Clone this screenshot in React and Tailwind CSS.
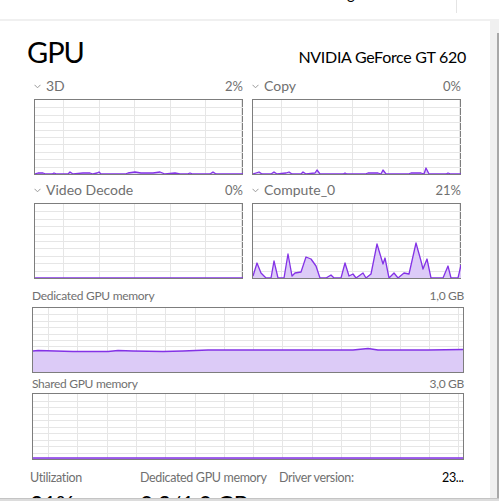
import React from "react";

const LINE = "#8332e6";
const FILL = "#dccbf7";
const GRID = "#e6e6e6";

const D3 = [[0,0],[3,1],[8,1],[11,0],[17,0],[19,1],[22,0],[33,0],[35,2],[38,0],[48,1],[55,1],[58,0],[62,1],[64,2],[66,0],[90,0],[93,1],[100,2],[106,1],[112,1],[118,1],[125,2],[130,0],[140,1],[145,0],[152,0],[155,1],[158,0],[175,0],[178,2],[181,0],[208,0]];
const COPY = [[0,0],[3,1],[6,2],[9,0],[18,0],[21,2],[24,0],[33,1],[36,2],[39,0],[48,0],[50,2],[53,0],[62,1],[64,4],[67,0],[90,0],[92,1],[94,0],[112,0],[115,1],[125,1],[128,0],[130,4],[133,0],[155,0],[158,1],[168,1],[171,0],[173,6],[176,0],[193,0],[195,1],[198,0],[208,0]];
const COMPUTE = [[0,2],[4,15],[8,5],[13,0],[18,0],[21,17],[25,0],[31,0],[35,24],[39,2],[42,5],[48,6],[53,21],[58,19],[63,12],[67,0],[73,0],[78,3],[81,0],[88,0],[92,15],[96,2],[100,4],[103,0],[110,5],[113,0],[118,4],[124,34],[130,14],[132,20],[136,0],[141,5],[145,0],[151,5],[156,4],[163,35],[168,17],[170,9],[174,19],[178,0],[190,0],[195,12],[198,0],[205,0],[208,13]];
const DEDICATED = [[0,21],[5,21.5],[40,20.5],[75,20.5],[85,21.5],[100,21],[130,20.5],[150,21],[175,22],[230,22],[300,22],[320,22],[335,23.5],[345,22],[375,22],[395,22],[430,22.5]];
const SHARED = [[0,1],[430,1]];

function Chevron() {
    return (
        <svg width="7" height="5" viewBox="0 0 7 5" className="mr-[5px] mt-[1px]">
            <polyline points="0.5,0.8 3.5,3.8 6.5,0.8" fill="none" stroke="#999" strokeWidth="1" />
        </svg>
    );
}

function Chart({ w, h, vStart, vStep, rows, data, className = "" }) {
    const vlines = [];
    for (let x = vStart; x < w; x += vStep) vlines.push(Math.round(x) + 0.5);
    const hlines = [];
    for (let i = 1; i < rows; i++) hlines.push(Math.round((h * i) / rows) + 0.5);
    const pts = data.map(([x, y]) => `${x},${h - y}`);
    const line = "M" + pts.join(" L");
    const area = line + ` L${w},${h} L0,${h} Z`;
    return (
        <div className={`border border-[#7d7d7d] bg-white ${className}`}>
            <svg width={w} height={h} viewBox={`0 0 ${w} ${h}`} className="block">
                {hlines.map((y) => <line key={"h" + y} x1="0" x2={w} y1={y} y2={y} stroke={GRID} strokeWidth="1" />)}
                {vlines.map((x) => <line key={"v" + x} x1={x} x2={x} y1="0" y2={h} stroke={GRID} strokeWidth="1" />)}
                <path d={area} fill={FILL} />
                <path d={line} fill="none" stroke={LINE} strokeWidth="1.3" strokeLinejoin="round" />
            </svg>
        </div>
    );
}

function SmallChart({ label, value, data, className = "" }) {
    return (
        <div className={className}>
            <div className="flex items-center h-4 text-[14px] leading-4 text-[#707070]">
                <Chevron />
                <span className="flex-1">{label}</span>
                <span className="text-[13px]">{value}</span>
            </div>
            <Chart w={208} h={74} vStart={28} vStep={35.6} rows={10} data={data} className="mt-[5px]" />
        </div>
    );
}

export default function App() {
    return (
        <div className="w-[499px] h-[501px] bg-white overflow-hidden flex flex-col font-['Lato',sans-serif]">
            <div className="h-[19px] relative overflow-hidden shrink-0">
                <span className="absolute left-[347px] top-[-17px] text-[15px] leading-5 text-black">g</span>
                <div className="absolute left-[456px] top-0 w-px h-[13px] bg-[#e4e4e4]" />
            </div>
            <div className="h-[2px] bg-[#f0f0f0] shrink-0" />
            <div className="flex flex-1 min-h-0">
                <div className="flex-1 min-w-0 overflow-hidden pl-[32px] pr-[26px]">
                    <div className="flex items-baseline justify-between -ml-[5px] -mr-[2px] mt-[16px]">
                        <span className="text-[29px] leading-[29px] tracking-[-1px] text-black">GPU</span>
                        <span className="text-[16px] leading-5 tracking-[-0.3px] text-black">NVIDIA GeForce GT 620</span>
                    </div>
                    <div className="grid grid-cols-2 gap-x-[9px] ml-[2px] mr-[3px] mt-[11px]">
                        <SmallChart label="3D" value="2%" data={D3} />
                        <SmallChart label="Copy" value="0%" data={COPY} />
                        <SmallChart label="Video Decode" value="0%" data={[[0, 0], [208, 0]]} className="mt-[7px]" />
                        <SmallChart label="Compute_0" value="21%" data={COMPUTE} className="mt-[7px]" />
                    </div>
                    <div className="flex justify-between h-4 text-[12px] leading-4 tracking-[-0.3px] text-[#707070] mt-[9px]">
                        <span>Dedicated GPU memory</span>
                        <span>1,0 GB</span>
                    </div>
                    <Chart w={430} h={64} vStart={15} vStep={29.3} rows={10} data={DEDICATED} className="mt-[3px]" />
                    <div className="flex justify-between h-4 text-[12px] leading-4 tracking-[-0.3px] text-[#707070] mt-[3px]">
                        <span>Shared GPU memory</span>
                        <span>3,0 GB</span>
                    </div>
                    <Chart w={430} h={65} vStart={15} vStep={29.3} rows={10} data={SHARED} className="mt-px" />
                    <div className="flex text-[12.5px] leading-4 tracking-[-0.35px] text-[#707070] mt-[10px] -ml-[2px]">
                        <div className="w-[110px] shrink-0">
                            <div>Utilization</div>
                            <div className="text-[23px] leading-7 text-black mt-[4px]">21%</div>
                        </div>
                        <div className="w-[139px] shrink-0">
                            <div className="whitespace-nowrap">Dedicated GPU memory</div>
                            <div className="text-[23px] leading-7 text-black mt-[4px]">0,3/1,0 GB</div>
                        </div>
                        <div className="flex-1 grid grid-cols-[163px_1fr] gap-y-[3px]">
                            <span>Driver version:</span>
                            <span className="text-black">23...</span>
                            <span>Driver date:</span>
                            <span className="text-black">20...</span>
                        </div>
                    </div>
                </div>
                <div className="w-[9px] shrink-0 bg-[#f0f0f0] flex justify-end pt-[12px]">
                    <div className="w-[2px] h-full bg-[#a8a8a8]" />
                </div>
            </div>
            <div className="h-[3px] shrink-0 bg-[#dcdcdc] border-t border-[#c4c4c4]" />
        </div>
    );
}
